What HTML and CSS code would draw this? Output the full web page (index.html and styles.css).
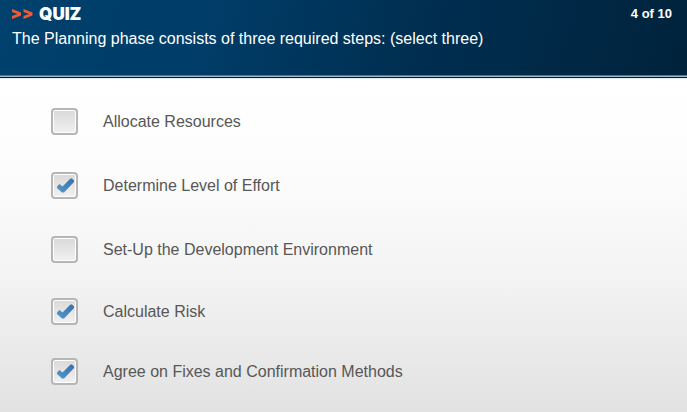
FILE: index.html
```html
<!DOCTYPE html>
<html lang="en">
<head>
<meta charset="utf-8">
<meta name="viewport" content="width=device-width, initial-scale=1">
<title>Quiz</title>
<link rel="stylesheet" href="styles.css">
</head>
<body>
<header class="quiz-header">
  <div class="title-row">
    <h1 class="title"><svg class="chevrons" viewBox="0 0 21 10" aria-hidden="true"><path d="M0 0 9 3.500V6.500L0 10V7L5.500 5 0 3ZM11.500 0 20.500 3.500V6.500L11.500 10V7L17 5 11.500 3Z"/></svg>QUIZ</h1>
    <span class="progress">4 of 10</span>
  </div>
  <p class="question" id="question">The Planning phase consists of three required steps: (select three)</p>
</header>
<main>
  <form class="answers" role="group" aria-labelledby="question">
    <label class="answer"><span class="box"><input type="checkbox"><svg class="tick" viewBox="0 0 27 27" aria-hidden="true"><use href="#tick"/></svg></span>Allocate Resources</label>
    <label class="answer"><span class="box"><input type="checkbox" checked><svg class="tick" viewBox="0 0 27 27" aria-hidden="true"><defs><linearGradient id="blue" x1="0" y1="1" x2="1" y2="0"><stop offset="0" stop-color="#529bcb"/><stop offset="1" stop-color="#386eae"/></linearGradient><path id="tick" d="M6 14.500 8.500 12 11.500 14.500 19.500 6.500H21L23 8.500V10L13 20.500H11L6 16Z" fill="url(#blue)"/></defs><use href="#tick"/></svg></span>Determine Level of Effort</label>
    <label class="answer"><span class="box"><input type="checkbox"><svg class="tick" viewBox="0 0 27 27" aria-hidden="true"><use href="#tick"/></svg></span>Set-Up the Development Environment</label>
    <label class="answer"><span class="box"><input type="checkbox" checked><svg class="tick" viewBox="0 0 27 27" aria-hidden="true"><use href="#tick"/></svg></span>Calculate Risk</label>
    <label class="answer"><span class="box"><input type="checkbox" checked><svg class="tick" viewBox="0 0 27 27" aria-hidden="true"><use href="#tick"/></svg></span>Agree on Fixes and Confirmation Methods</label>
  </form>
</main>
</body>
</html>
```
FILE: styles.css
```css
* {
  box-sizing: border-box;
}

body {
  margin: 0;
  min-height: 100vh;
  display: flex;
  flex-direction: column;
  font-family: "Liberation Sans", Arial, sans-serif;
  font-size: 16px;
  line-height: 20px;
  color: #575757;
}

.quiz-header {
  position: relative;
  padding: 4px 15px 26px 12px;
  color: #fff;
  background: linear-gradient(105deg, #00416d 0%, #003d68 30%, #002e50 62%, #00233c 100%);
  border-bottom: 1px solid #4f7898;
  box-shadow: 0 1px #a2b9c9, 0 2px #001d34, 0 3px #e2edf3;
}

.title-row {
  display: flex;
  justify-content: space-between;
  align-items: center;
}

.title {
  display: flex;
  align-items: center;
  gap: 6px;
  margin: 0;
  font-family: Inter, "Arial Black", sans-serif;
  font-size: 17px;
  font-weight: 900;
}

.chevrons {
  width: 21px;
  height: 10px;
  fill: #f15a35;
}

.progress {
  font-size: 13px;
  font-weight: bold;
}

.question {
  margin: 5px 0 0;
}

main {
  flex: 1;
  padding: 32px 51px 0;
  background: linear-gradient(#fff 0%, #fdfdfd 25%, #f4f4f4 58%, #e2e2e2 100%);
}

.answers {
  display: grid;
  grid-template-rows: 64px 64px 62px 60px auto;
  justify-items: start;
  align-items: start;
}

.answer {
  display: flex;
  align-items: center;
  gap: 25px;
}

.box {
  display: grid;
  width: 27px;
  height: 27px;
}

.box input,
.tick {
  grid-area: 1 / 1;
  width: 27px;
  height: 27px;
  margin: 0;
}

.box input {
  appearance: none;
  border: 2px solid #b6b6b6;
  border-radius: 4px;
  background: linear-gradient(#d9d9d9, #f1f1f1);
  box-shadow: inset 0 0 0 1px #fff;
}

.tick {
  visibility: hidden;
  pointer-events: none;
}

.box input:checked + .tick {
  visibility: visible;
}
```
